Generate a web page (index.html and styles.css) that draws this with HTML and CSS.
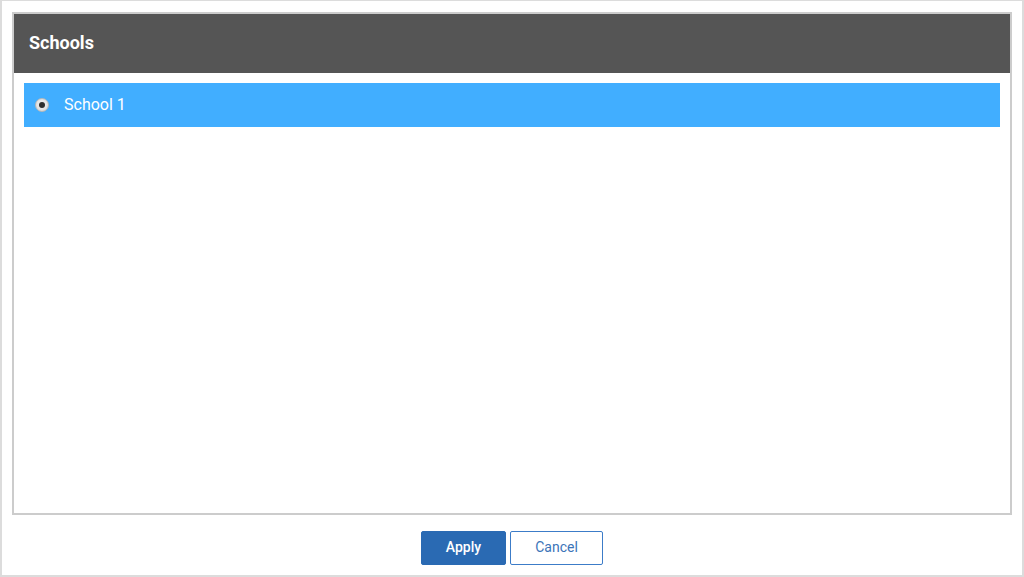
FILE: index.html
```html
<!DOCTYPE html>
<html>
<head>
<meta charset="utf-8">
<link rel="stylesheet" href="styles.css">
</head>
<body>
<div class="frame">
  <div class="panel">
    <div class="panel-header">Schools</div>
    <div class="panel-body">
      <div class="row selected">
        <span class="radio"><span class="dot"></span></span>
        <span class="label">School 1</span>
      </div>
    </div>
  </div>
  <div class="actions">
    <button class="btn btn-primary">Apply</button>
    <button class="btn btn-secondary">Cancel</button>
  </div>
</div>
</body>
</html>
```

FILE: styles.css
```css
html, body {
  margin: 0;
  padding: 0;
  background: #ffffff;
  font-family: Roboto, "Liberation Sans", Arial, sans-serif;
}
.frame {
  box-sizing: border-box;
  width: 1024px;
  height: 577px;
  border: 2px solid #dcdcdc;
  border-top-width: 1px;
  padding: 11px 10px 10px 10px;
  display: flex;
  flex-direction: column;
}
.panel {
  flex: 1;
  border: 2px solid #cccccc;
  display: flex;
  flex-direction: column;
  min-height: 0;
}
.panel-header {
  height: 59px;
  background: #555555;
  color: #ffffff;
  font-weight: 700;
  font-size: 18px;
  display: flex;
  align-items: center;
  padding-left: 15px;
  padding-bottom: 2px;
  box-sizing: border-box;
}
.panel-body {
  flex: 1;
  padding: 10px;
}
.row {
  height: 44px;
  display: flex;
  align-items: center;
  padding-left: 11px;
  padding-bottom: 1px;
  box-sizing: border-box;
}
.row.selected {
  background: #41aeff;
}
.radio {
  width: 14px;
  height: 14px;
  border-radius: 50%;
  box-sizing: border-box;
  background: radial-gradient(circle at 50% 45%, #f6f6f6 0%, #e2e2e2 60%, #c8c8c8 100%);
  border: 1px solid #b8b8b8;
  display: flex;
  align-items: center;
  justify-content: center;
}
.dot {
  width: 6px;
  height: 6px;
  border-radius: 50%;
  background: #2e2e2e;
}
.label {
  color: #ffffff;
  font-size: 16px;
  margin-left: 15px;
}
.actions {
  display: flex;
  justify-content: center;
  gap: 4px;
  padding-top: 16px;
}
.btn {
  height: 34px;
  font-family: Roboto, "Liberation Sans", Arial, sans-serif;
  font-size: 14px;
  border-radius: 2px;
  box-sizing: border-box;
  cursor: pointer;
  padding: 0 0 2px 0;
}
.btn-primary {
  width: 85px;
  background: #2a6ab3;
  border: 1px solid #2a6ab3;
  color: #ffffff;
  font-weight: 500;
}
.btn-secondary {
  width: 93px;
  background: #ffffff;
  border: 1px solid #3c7cc8;
  color: #3c74b8;
}
```
